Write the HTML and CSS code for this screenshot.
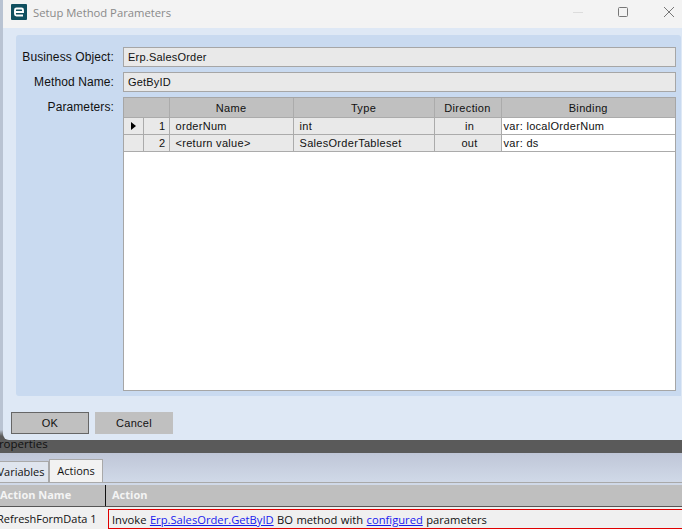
FILE: index.html
```html
<!DOCTYPE html>
<html lang="en">
<head>
<meta charset="utf-8">
<title>Setup Method Parameters</title>
<link rel="stylesheet" href="styles.css">
</head>
<body>
<div class="dialog-wrap">
  <div class="dialog">
    <header class="titlebar">
      <svg class="app-icon" width="16" height="16" viewBox="0 0 16 16" aria-hidden="true">
        <rect width="16" height="16" rx="1" fill="#0f4f5f"/>
        <path d="M4 8h8V6q0-1.500-1.500-1.500h-5Q4 4.500 4 6v4q0 1.500 1.500 1.500H12" fill="none" stroke="#fff" stroke-width="1.900"/>
      </svg>
      <span class="title">Setup Method Parameters</span>
      <svg class="win-controls" width="101" height="14" viewBox="0 0 101 14" aria-hidden="true">
        <path d="M0 7.500h10" stroke="#dcdcdc" fill="none"/>
        <rect x="45.500" y="2.500" width="9" height="9" rx="1" fill="none" stroke="#777"/>
        <path d="M101 2L91 12M91 2l10 10" stroke="#777" fill="none"/>
      </svg>
    </header>
    <div class="dialog-body">
      <section class="panel">
        <div class="form-row">
          <label class="form-label">Business Object:</label>
          <div class="field">Erp.SalesOrder</div>
        </div>
        <div class="form-row">
          <label class="form-label">Method Name:</label>
          <div class="field">GetByID</div>
        </div>
        <div class="form-row form-row-grow">
          <label class="form-label">Parameters:</label>
          <div class="grid-box">
            <table class="params">
              <colgroup>
                <col class="c-sel"><col class="c-num"><col class="c-name"><col class="c-type"><col class="c-dir"><col class="c-bind">
              </colgroup>
              <thead>
                <tr><th colspan="2"></th><th>Name</th><th>Type</th><th>Direction</th><th>Binding</th></tr>
              </thead>
              <tbody>
                <tr>
                  <td class="sel"><span class="arrow"></span></td><td class="num">1</td><td>orderNum</td><td>int</td><td class="dir">in</td><td class="bind">var: localOrderNum</td>
                </tr>
                <tr>
                  <td class="sel"></td><td class="num">2</td><td>&lt;return value&gt;</td><td>SalesOrderTableset</td><td class="dir">out</td><td class="bind">var: ds</td>
                </tr>
              </tbody>
            </table>
          </div>
        </div>
      </section>
      <div class="buttons">
        <button class="btn btn-default">OK</button>
        <button class="btn">Cancel</button>
      </div>
    </div>
  </div>
</div>
<div class="props-band"><span class="props-title">Properties</span></div>
<div class="tabstrip">
  <div class="tab tab-off">Variables</div>
  <div class="tab tab-on">Actions</div>
</div>
<div class="actions">
  <div class="act-head">
    <div class="act-name">Action Name</div>
    <div class="act-action">Action</div>
  </div>
  <div class="act-row">
    <div class="act-name">RefreshFormData 1</div>
    <div class="act-action"><div class="act-box">Invoke <a href="#">Erp.SalesOrder.GetByID</a> BO method with <a href="#">configured</a> parameters</div></div>
  </div>
</div>
</body>
</html>
```
FILE: styles.css
```css
* { box-sizing: border-box; }
html, body { margin: 0; height: 100%; }
body {
  width: 682px;
  height: 529px;
  overflow: hidden;
  background: #d0d9e8;
  color: #111;
  font-family: "Liberation Sans", sans-serif;
  font-size: 11px;
  display: flex;
  flex-direction: column;
}
.dialog-wrap {
  height: 440px;
  flex: none;
  background: linear-gradient(#b9c3d2 0, #b9c3d2 430px, #5a5a5a 436px);
}
.dialog {
  height: 440px;
  margin-left: 3px;
  border-bottom-left-radius: 6px;
  background: #dee8f5;
  display: flex;
  flex-direction: column;
  overflow: hidden;
}
.titlebar {
  height: 28px;
  flex: none;
  background: #f3f3f3;
  display: flex;
  align-items: center;
  padding: 0 0 4px 8px;
}
.app-icon { flex: none; margin-right: 6px; }
.title {
  color: #8a8a8a;
  font-family: "Open Sans", sans-serif;
  font-size: 11.250px;
}
.win-controls { margin-left: auto; margin-right: 8px; flex: none; overflow: visible; }
.dialog-body { flex: 1; display: flex; flex-direction: column; padding: 7px 0 6px 13px; }
.panel {
  height: 361px;
  flex: none;
  margin-right: 1px;
  background: #c9daf0;
  border-radius: 3px 3px 0 3px;
  padding: 12px 4px 4px 0;
  display: flex;
  flex-direction: column;
  gap: 5px;
}
.form-row { display: flex; align-items: center; }
.form-row-grow { flex: 1; align-items: flex-start; min-height: 0; }
.form-label {
  width: 107px;
  padding-right: 9px;
  text-align: right;
  font-size: 12px;
  letter-spacing: 0.100px;
  flex: none;
}
.form-row-grow .form-label { padding-top: 3px; }
.field {
  width: 553px;
  height: 20px;
  border: 1px solid #a6a6a6;
  background: #e9e9e9;
  padding: 0 4px;
  line-height: 19px;
  font-size: 11px;
  letter-spacing: 0.200px;
}
.grid-box {
  width: 553px;
  height: 294px;
  border: 1px solid #a6a6a6;
  background: #fff;
}
.params { border-collapse: collapse; table-layout: fixed; width: 551px; }
.c-sel { width: 19px; }
.c-num { width: 26px; }
.c-name { width: 124px; }
.c-type { width: 141px; }
.c-dir { width: 67px; }
.params th {
  height: 19px;
  background: #c0c0c0;
  border: 1px solid #ababab;
  border-top: 0;
  font-weight: 400;
  font-size: 11px;
  letter-spacing: 0.350px;
  padding: 1px 0 0;
  text-align: center;
}
.params td {
  height: 17px;
  background: #e9e9e9;
  border: 1px solid #ababab;
  padding: 0 6px;
  font-size: 11px;
  letter-spacing: 0.300px;
  white-space: nowrap;
  overflow: hidden;
}
.params th:first-child, .params td:first-child { border-left: 0; }
.params th:last-child, .params td:last-child { border-right: 0; }
.params td.sel { padding: 0; }
.arrow {
  display: block;
  width: 0;
  height: 0;
  margin-left: 7px;
  border-left: 5px solid #000;
  border-top: 4px solid transparent;
  border-bottom: 4px solid transparent;
}
.params td.num { text-align: right; padding-right: 3px; }
.params td.dir { text-align: center; padding: 0 0 0 4px; }
.params td.bind { background: #fff; padding: 1px 0 0 2px; }
.buttons { display: flex; gap: 6px; margin-top: 16px; margin-left: -5px; }
.btn {
  width: 78px;
  height: 22px;
  background: #c0c0c0;
  border: 1px solid #c0c0c0;
  color: #111;
  font-family: "Liberation Sans", sans-serif;
  font-size: 11px;
  letter-spacing: 0.300px;
  padding: 0;
}
.btn-default { border-color: #666; }
.props-band {
  height: 13px;
  flex: none;
  background: #5a5a5a;
  overflow: hidden;
}
.props-title {
  display: block;
  margin-left: -8px;
  margin-top: -3px;
  font-family: "Open Sans", sans-serif;
  font-size: 11.500px;
  line-height: 14px;
  color: #111;
}
.tabstrip {
  height: 30px;
  flex: none;
  display: flex;
  align-items: flex-end;
  background: linear-gradient(#bfc6d7, #d0d9e8);
  border-bottom: 1px solid #a9a9a9;
  overflow: hidden;
}
.tab {
  font-family: "Open Sans", sans-serif;
  font-size: 11px;
  color: #111;
  border: 1px solid #a9a9a9;
  border-bottom: 0;
  text-align: center;
}
.tab-off { width: 49px; height: 21px; line-height: 20px; text-indent: -6px; white-space: nowrap; background: #dfe5ee; border-left: 0; }
.tab-on { width: 54px; height: 23px; line-height: 22px; background: #f2f2f2; }
.actions {
  flex: 1;
  display: flex;
  flex-direction: column;
  padding-top: 2px;
  background: #f0f0f0;
  background-clip: content-box;
}
.act-head, .act-row { display: flex; }
.act-name { width: 106px; flex: none; white-space: nowrap; }
.act-action { flex: 1; min-width: 0; }
.act-head {
  height: 22px;
  background: #bfbfbf;
  border-bottom: 1px solid #555;
  color: #f4f4f4;
  font-family: "Open Sans", sans-serif;
  font-size: 11px;
  font-weight: 700;
  line-height: 20px;
}
.act-head .act-name { border-right: 1px solid #111; }
.act-head .act-action { padding-left: 6px; }
.act-row { flex: 1; font-family: "Open Sans", sans-serif; font-size: 11px; color: #111; }
.act-row .act-name { margin-left: -3px; width: 109px; line-height: 24px; }
.act-row .act-action { padding: 2px 0 0 2px; }
.act-box {
  height: 20px;
  border: 1px solid #e00000;
  border-right: 0;
  padding-left: 3px;
  line-height: 19px;
  font-size: 11.200px;
  word-spacing: 0.500px;
  white-space: nowrap;
}
.act-box a { color: #1a1aee; }
```
